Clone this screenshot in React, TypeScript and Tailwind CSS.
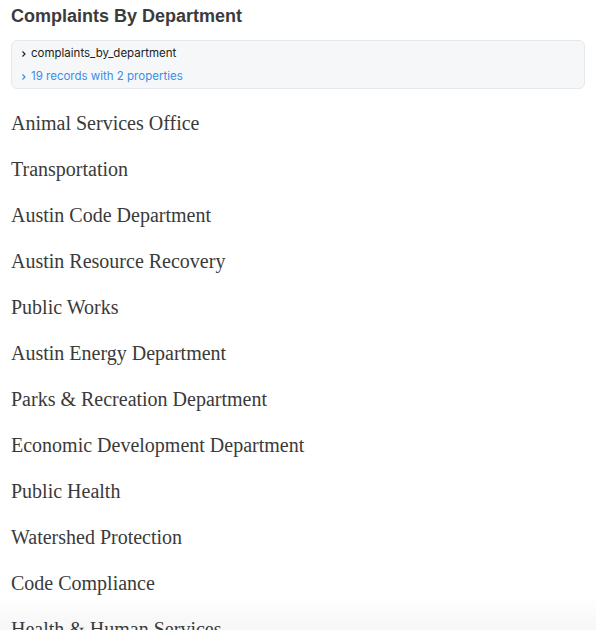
const departments = [
  "Animal Services Office",
  "Transportation",
  "Austin Code Department",
  "Austin Resource Recovery",
  "Public Works",
  "Austin Energy Department",
  "Parks & Recreation Department",
  "Economic Development Department",
  "Public Health",
  "Watershed Protection",
  "Code Compliance",
  "Health & Human Services",
  "Austin Water Utility",
  "Development Services",
];

function Chevron({ className }: { className?: string }) {
  return (
    <svg viewBox="0 0 8 8" className={className} fill="none" stroke="currentColor" strokeWidth="1.2">
      <path d="M2.5 1.5 L5 4 L2.5 6.5" />
    </svg>
  );
}

export default function App() {
  return (
    <div className="relative h-[630px] overflow-hidden bg-white px-[11px]">
      {/* soft fade at the bottom edge, sits behind the text */}
      <div className="pointer-events-none absolute inset-x-0 bottom-0 h-[34px] bg-gradient-to-b from-white to-[#f6f6f6]" />

      <h2 className="relative pt-[5px] text-[18px] leading-[22px] font-bold text-[#3b3b3b] font-['Liberation_Sans',sans-serif]">
        Complaints By Department
      </h2>

      {/* inspector */}
      <div className="relative mt-[13px] rounded-md border border-[#e6e8ec] bg-[#f6f7f9] px-[8px] pt-[4px] pb-[3px] font-['Inter',sans-serif] text-[11.5px]">
        <div className="flex h-[17px] items-center gap-[3px] text-[#222]">
          <Chevron className="h-[8px] w-[8px]" />
          <span>complaints_by_department</span>
        </div>
        <div className="mt-[6px] flex h-[17px] items-center gap-[3px] text-[#3b8ee8]">
          <Chevron className="h-[8px] w-[8px]" />
          <span>19 records with 2 properties</span>
        </div>
      </div>

      {/* list */}
      <div className="relative mt-[11px] flex flex-col font-['Liberation_Serif',serif] text-[20px] text-[#3a3a3a]">
        {departments.map((d) => (
          <div key={d} className="flex h-[46px] items-center">
            {d}
          </div>
        ))}
      </div>
    </div>
  );
}
